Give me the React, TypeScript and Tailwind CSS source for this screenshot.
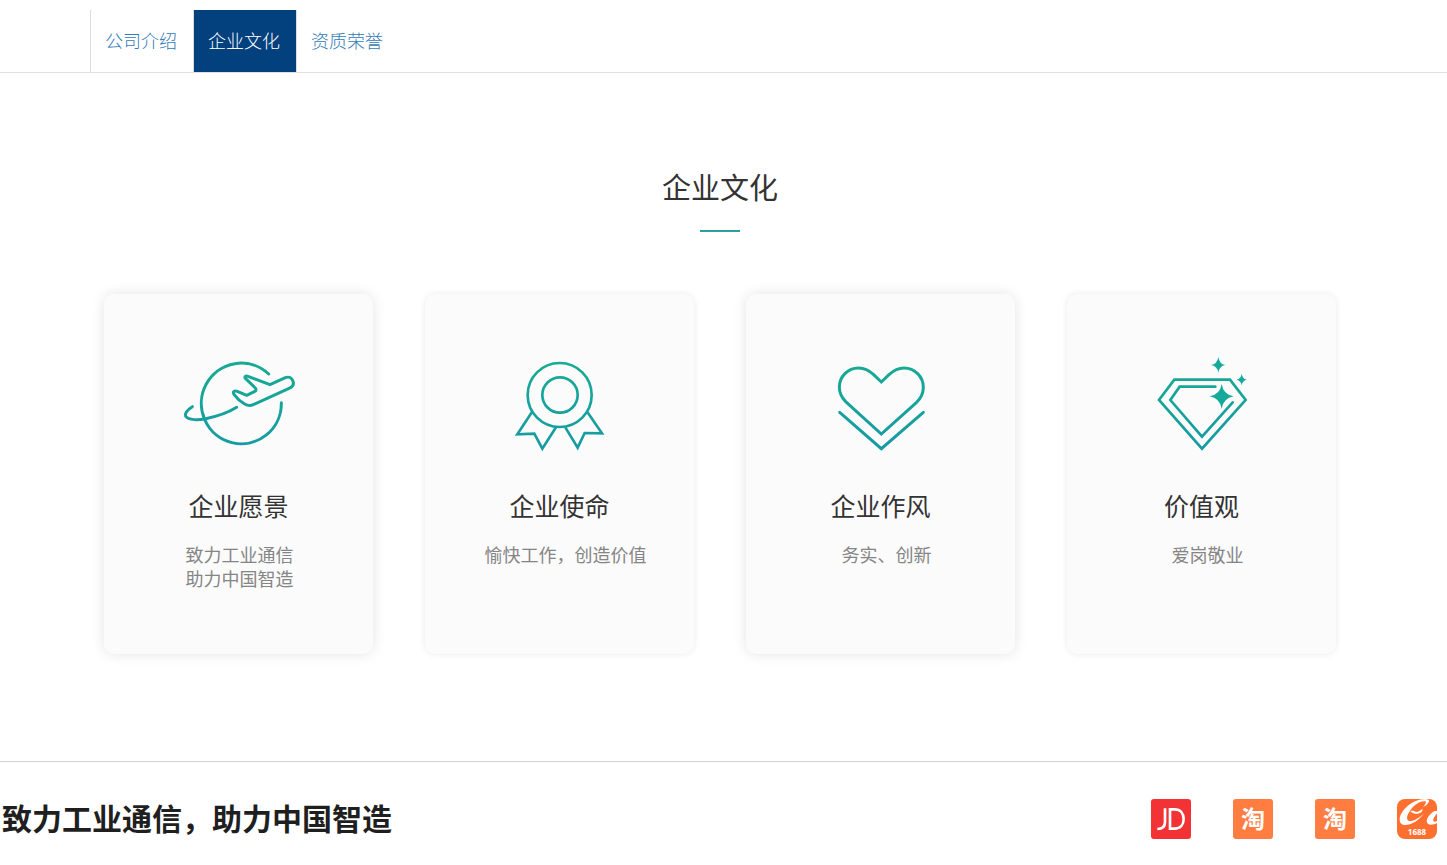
import type { ReactNode } from 'react';

const tabs = [
  { label: '公司介绍', active: false },
  { label: '企业文化', active: true },
  { label: '资质荣誉', active: false },
];

function VisionIcon() {
  return (
    <svg viewBox="-6 0 420 360" className="h-[120px] w-[140px]" fill="none" stroke="url(#teal)" strokeWidth="9" strokeLinecap="round" strokeLinejoin="round" aria-hidden="true">
      <defs>
        <linearGradient id="teal" gradientUnits="userSpaceOnUse" x1="0" y1="60" x2="0" y2="330">
          <stop offset="0" stopColor="#18ab92" />
          <stop offset="1" stopColor="#169aa5" />
        </linearGradient>
      </defs>
      <path d="M293 102 A120 121 0 1 0 331 188" />
      <path d="M64 200 C48 210 40 220 44 229 C52 242 84 240 104 236 C136 230 168 220 197 202" />
      <path d="M297 134 L343 113 C352 109 361 113 365 121 C369 130 367 138 359 143 L247 194 C238 198 230 197 221 192 C207 184 198 176 189 163 C184 154 190 151 199 154 L227 166 L250 155 C256 152 256 149 253 144 L224 116 C219 110 224 107 231 109 Z" />
    </svg>
  );
}

function MissionIcon() {
  return (
    <svg viewBox="-32 0 420 360" className="h-[120px] w-[140px]" fill="none" stroke="url(#teal)" strokeWidth="8" aria-hidden="true">
      <circle cx="177" cy="165" r="96" />
      <circle cx="178" cy="165" r="53" />
      <path d="M94 216 L50 283 L101 281 L125 326 L166 262" />
      <path d="M260 216 L304 280 L252 279 L231 323 L194 262" />
    </svg>
  );
}

function StyleIcon() {
  return (
    <svg viewBox="-30 0 420 360" className="h-[120px] w-[140px]" fill="none" stroke="url(#teal)" strokeWidth="9" strokeLinecap="round" aria-hidden="true">
      <path d="M181 126 L158 104 C144 91 130 84 113 84 C80 84 55 110 55 142 C55 159 62 173 74 185 L181 282 L286 188 C300 175 307 161 307 142 C307 110 281 84 249 84 C232 84 218 91 204 104 Z" />
      <path d="M56 217 L181 326 L307 217" />
    </svg>
  );
}

function ValuesIcon() {
  return (
    <svg viewBox="-26 0 420 360" className="h-[120px] w-[140px]" fill="none" stroke="url(#teal)" strokeWidth="8" aria-hidden="true">
      <path d="M101 119 H268 L315 180 L184 326 L55 180 Z" />
      <path d="M224 140 H117 L89 180 L184 290 L276 187" strokeLinecap="round" />
      <g fill="#14a99a" stroke="none">
        <path d="M233 51 Q236 72 254 75 Q236 78 233 98 Q230 78 211 75 Q230 72 233 51 Z" />
        <path d="M303 101 Q305 116 318 119 Q305 122 303 136 Q301 122 288 119 Q301 116 303 101 Z" />
        <path d="M243 132 Q248 164 279 169 Q248 175 243 206 Q238 175 207 169 Q238 164 243 132 Z" />
      </g>
    </svg>
  );
}

type CardProps = { title: string; lines: string[]; icon: ReactNode; raised: boolean };

const cards: CardProps[] = [
  { title: '企业愿景', lines: ['致力工业通信', '助力中国智造'], icon: <VisionIcon />, raised: true },
  { title: '企业使命', lines: ['愉快工作，创造价值'], icon: <MissionIcon />, raised: false },
  { title: '企业作风', lines: ['务实、创新'], icon: <StyleIcon />, raised: true },
  { title: '价值观', lines: ['爱岗敬业'], icon: <ValuesIcon />, raised: false },
];

function Card({ title, lines, icon, raised }: CardProps) {
  return (
    <article
      className={`flex min-h-[360px] flex-col items-center rounded-[10px] bg-[#fbfbfb] pt-[46px] pb-8 ${
        raised ? 'shadow-[0_0_14px_rgba(0,0,0,0.11)]' : 'shadow-[0_0_6px_rgba(0,0,0,0.09)]'
      }`}
    >
      {icon}
      <h3 className="mt-[27px] text-[25px] leading-9 text-[#333333]">{title}</h3>
      <p className={`mt-[19px] text-lg leading-6 text-[#858585] ${lines.length === 1 ? 'pl-3' : 'pl-[2px]'}`}>
        {lines.map((line) => (
          <span key={line} className="block">
            {line}
          </span>
        ))}
      </p>
    </article>
  );
}

function TaobaoLink() {
  return (
    <a href="#taobao" className="block size-10 rounded-[3px] bg-[#ff7d41] text-center text-2xl leading-[37px] font-bold text-white">
      淘
    </a>
  );
}

export default function App() {
  return (
    <div className="bg-white font-['Noto_Sans_CJK_SC',sans-serif]">
      <nav className="border-b border-[#e0e0e0] pt-[10px] pl-[90px]">
        <ul className="flex">
          {tabs.map((tab, i) => (
            <li key={tab.label} className={`${i === 0 ? 'border-l' : ''} ${i < 2 ? 'border-r' : ''} border-[#dddddd]`}>
              <a
                href="#culture"
                className={`block pr-4 pb-[2px] pl-[14px] text-lg leading-[60px] font-light ${tab.active ? 'bg-[#02407e] text-white' : 'text-[#337ab7]'}`}
              >
                {tab.label}
              </a>
            </li>
          ))}
        </ul>
      </nav>

      <main id="culture" className="pt-[93px] pr-[111px] pb-[107px] pl-[104px]">
        <h2 className="text-center text-[29px] leading-10 text-[#333333]">企业文化</h2>
        <div className="mx-auto mt-6 h-[2px] w-10 bg-[#2c9f9f]" />
        <div className="mt-[62px] grid grid-cols-4 gap-[52px]">
          {cards.map((card) => (
            <Card key={card.title} {...card} />
          ))}
        </div>
      </main>

      <footer className="flex items-center justify-between border-t border-[#d0d0d8] pt-[37px] pr-[10px] pb-[26px] pl-[2px]">
        <p className="pb-1 text-[30px] leading-9 font-bold text-[#1f1f1f]">致力工业通信，助力中国智造</p>
        <div className="flex gap-[42px]">
          <a href="#jd" aria-label="JD" className="block size-10 overflow-hidden rounded-[3px] bg-[#f23234]">
            <svg viewBox="0 0 120 120" className="size-10" fill="none" stroke="#ffffff" strokeWidth="8" aria-hidden="true">
              <path d="M42 28 V69 C42 82 34 90 19 90" />
              <path d="M57 31 V89 H71 C88 89 98 77 98 60 C98 43 88 31 71 31 Z" />
            </svg>
          </a>
          <TaobaoLink />
          <TaobaoLink />
          <a href="#1688" className="block size-10 overflow-hidden rounded-lg bg-[#ff6f30]">
            <svg viewBox="0 0 120 120" className="size-10" aria-hidden="true">
              <g fill="#ffffff">
                <path d="M84 0 C46 0 8 36 8 62 C9 81 29 81 46 73 C60 66 73 54 80 44 C64 58 48 68 36 66 C24 62 32 40 50 22 C60 12 74 6 86 7 C88 11 84 18 78 24 C86 22 94 14 96 7 C97 2 92 0 84 0 Z" />
                <path d="M40 36 C48 34 54 37 57 39 C64 38 71 35 76 29 C79 38 68 44 57 44 C50 44 44 42 40 36 Z" />
                <path d="M120 36 H113 C103 40 89 56 89 67 C90 80 107 79 120 73 V67 C112 70 107 67 109 60 C111 54 117 48 120 43 Z" />
              </g>
              <text x="60" y="108" textAnchor="middle" fill="#ffffff" fontFamily="Open Sans, sans-serif" fontWeight="700" fontSize="24">
                1688
              </text>
            </svg>
          </a>
        </div>
      </footer>
    </div>
  );
}
